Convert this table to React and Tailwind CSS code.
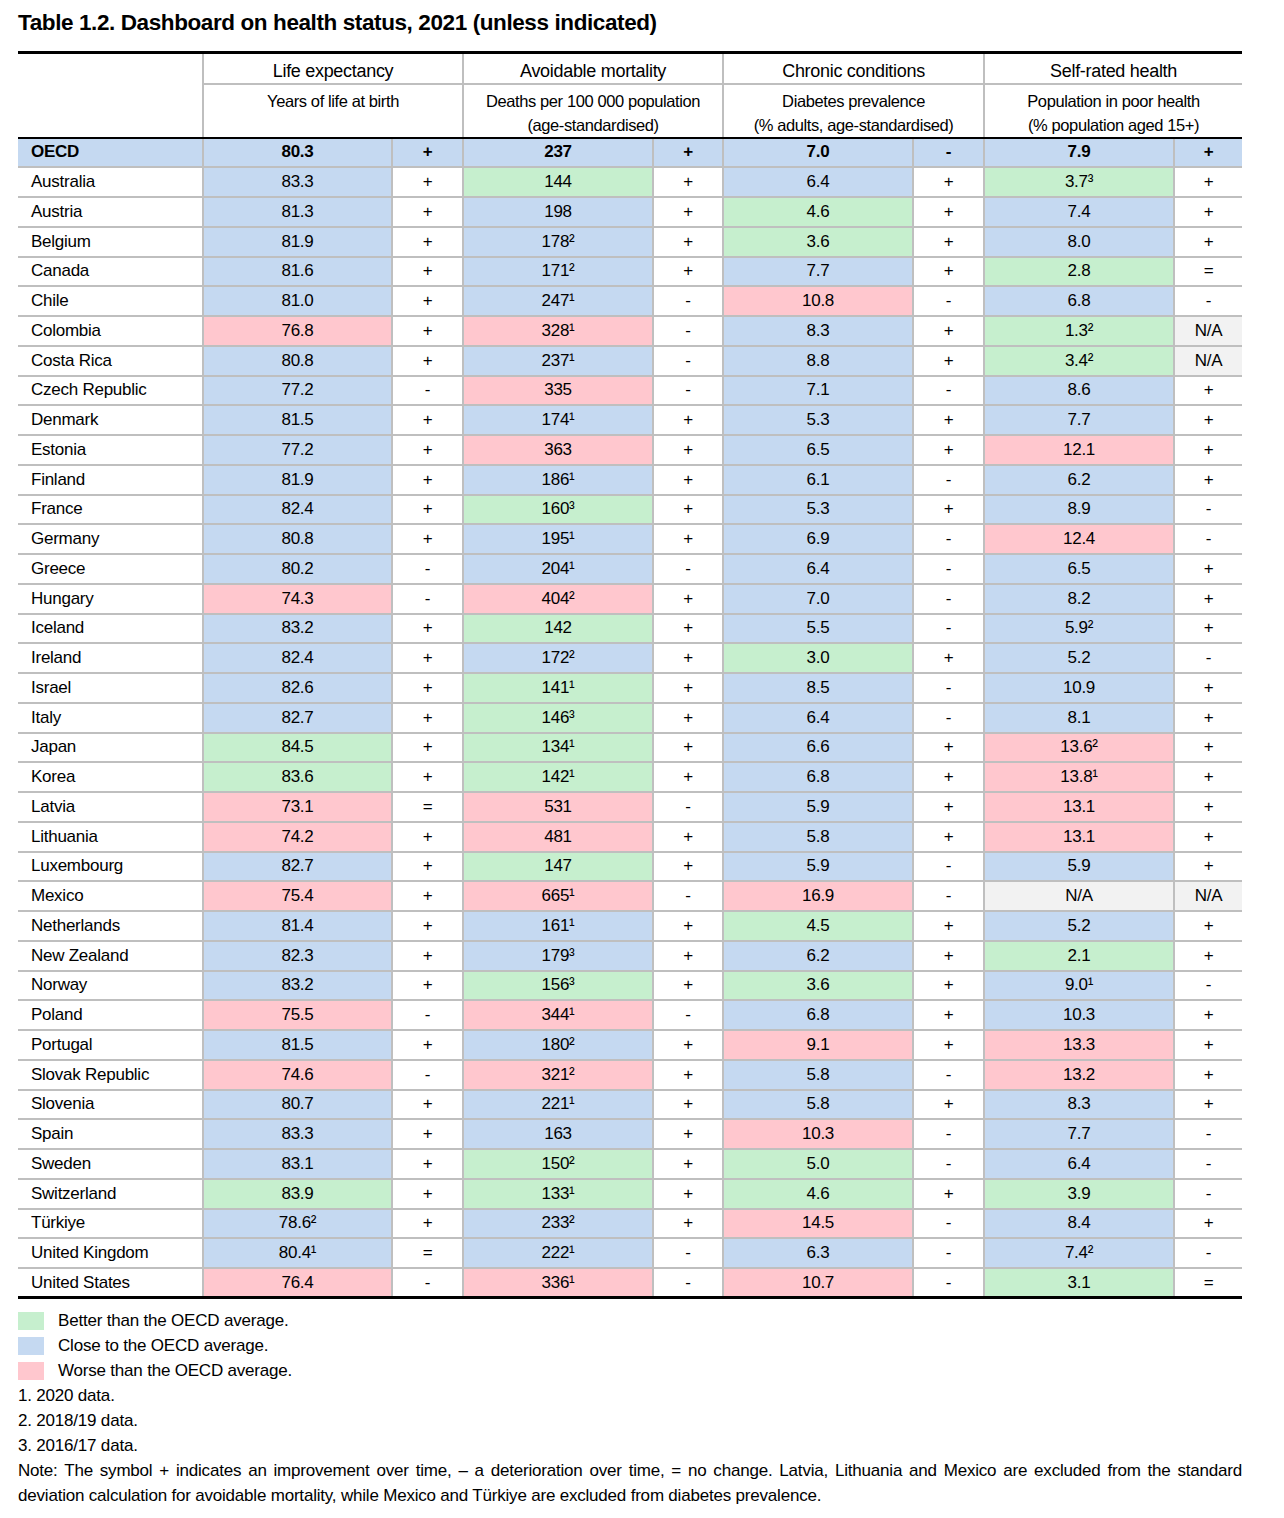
import React from "react";

const rows = [
  ["Australia", "83.3", "b", "+", "144", "g", "+", "6.4", "b", "+", "3.7³", "g", "+"],
  ["Austria", "81.3", "b", "+", "198", "b", "+", "4.6", "g", "+", "7.4", "b", "+"],
  ["Belgium", "81.9", "b", "+", "178²", "b", "+", "3.6", "g", "+", "8.0", "b", "+"],
  ["Canada", "81.6", "b", "+", "171²", "b", "+", "7.7", "b", "+", "2.8", "g", "="],
  ["Chile", "81.0", "b", "+", "247¹", "b", "-", "10.8", "p", "-", "6.8", "b", "-"],
  ["Colombia", "76.8", "p", "+", "328¹", "p", "-", "8.3", "b", "+", "1.3²", "g", "N/A"],
  ["Costa Rica", "80.8", "b", "+", "237¹", "b", "-", "8.8", "b", "+", "3.4²", "g", "N/A"],
  ["Czech Republic", "77.2", "b", "-", "335", "p", "-", "7.1", "b", "-", "8.6", "b", "+"],
  ["Denmark", "81.5", "b", "+", "174¹", "b", "+", "5.3", "b", "+", "7.7", "b", "+"],
  ["Estonia", "77.2", "b", "+", "363", "p", "+", "6.5", "b", "+", "12.1", "p", "+"],
  ["Finland", "81.9", "b", "+", "186¹", "b", "+", "6.1", "b", "-", "6.2", "b", "+"],
  ["France", "82.4", "b", "+", "160³", "g", "+", "5.3", "b", "+", "8.9", "b", "-"],
  ["Germany", "80.8", "b", "+", "195¹", "b", "+", "6.9", "b", "-", "12.4", "p", "-"],
  ["Greece", "80.2", "b", "-", "204¹", "b", "-", "6.4", "b", "-", "6.5", "b", "+"],
  ["Hungary", "74.3", "p", "-", "404²", "p", "+", "7.0", "b", "-", "8.2", "b", "+"],
  ["Iceland", "83.2", "b", "+", "142", "g", "+", "5.5", "b", "-", "5.9²", "b", "+"],
  ["Ireland", "82.4", "b", "+", "172²", "b", "+", "3.0", "g", "+", "5.2", "b", "-"],
  ["Israel", "82.6", "b", "+", "141¹", "g", "+", "8.5", "b", "-", "10.9", "b", "+"],
  ["Italy", "82.7", "b", "+", "146³", "g", "+", "6.4", "b", "-", "8.1", "b", "+"],
  ["Japan", "84.5", "g", "+", "134¹", "g", "+", "6.6", "b", "+", "13.6²", "p", "+"],
  ["Korea", "83.6", "g", "+", "142¹", "g", "+", "6.8", "b", "+", "13.8¹", "p", "+"],
  ["Latvia", "73.1", "p", "=", "531", "p", "-", "5.9", "b", "+", "13.1", "p", "+"],
  ["Lithuania", "74.2", "p", "+", "481", "p", "+", "5.8", "b", "+", "13.1", "p", "+"],
  ["Luxembourg", "82.7", "b", "+", "147", "g", "+", "5.9", "b", "-", "5.9", "b", "+"],
  ["Mexico", "75.4", "p", "+", "665¹", "p", "-", "16.9", "p", "-", "N/A", "n", "N/A"],
  ["Netherlands", "81.4", "b", "+", "161¹", "b", "+", "4.5", "g", "+", "5.2", "b", "+"],
  ["New Zealand", "82.3", "b", "+", "179³", "b", "+", "6.2", "b", "+", "2.1", "g", "+"],
  ["Norway", "83.2", "b", "+", "156³", "g", "+", "3.6", "g", "+", "9.0¹", "b", "-"],
  ["Poland", "75.5", "p", "-", "344¹", "p", "-", "6.8", "b", "+", "10.3", "b", "+"],
  ["Portugal", "81.5", "b", "+", "180²", "b", "+", "9.1", "p", "+", "13.3", "p", "+"],
  ["Slovak Republic", "74.6", "p", "-", "321²", "p", "+", "5.8", "b", "-", "13.2", "p", "+"],
  ["Slovenia", "80.7", "b", "+", "221¹", "b", "+", "5.8", "b", "+", "8.3", "b", "+"],
  ["Spain", "83.3", "b", "+", "163", "b", "+", "10.3", "p", "-", "7.7", "b", "-"],
  ["Sweden", "83.1", "b", "+", "150²", "g", "+", "5.0", "g", "-", "6.4", "b", "-"],
  ["Switzerland", "83.9", "g", "+", "133¹", "g", "+", "4.6", "g", "+", "3.9", "g", "-"],
  ["Türkiye", "78.6²", "b", "+", "233²", "b", "+", "14.5", "p", "-", "8.4", "b", "+"],
  ["United Kingdom", "80.4¹", "b", "=", "222¹", "b", "-", "6.3", "b", "-", "7.4²", "b", "-"],
  ["United States", "76.4", "p", "-", "336¹", "p", "-", "10.7", "p", "-", "3.1", "g", "="],
];

const bg = {
  b: "bg-[#c5d9f1]",
  g: "bg-[#c6efce]",
  p: "bg-[#ffc7ce]",
  n: "bg-[#f2f2f2]",
  w: "bg-white",
};

const cell = "border-l-2 border-b-2 border-[#bfbfbf] text-center p-0 align-middle";

function Row({ r }) {
  const out = [];
  for (let i = 0; i < 4; i++) {
    const v = r[1 + i * 3];
    const c = r[2 + i * 3];
    const s = r[3 + i * 3];
    out.push(
      <td key={"v" + i} className={`${cell} ${bg[c]}`}>{v}</td>
    );
    out.push(
      <td key={"s" + i} className={`${cell} ${s === "N/A" ? bg.n : bg.w}`}>{s}</td>
    );
  }
  return (
    <tr className="h-[29.75px]">
      <td className="border-b-2 border-[#bfbfbf] pl-[13px] p-0 text-left align-middle">{r[0]}</td>
      {out}
    </tr>
  );
}

function Swatch({ color, label }) {
  return (
    <div className="flex items-center h-[25px]">
      <div className={`w-[26px] h-[18px] ${color}`} />
      <span className="ml-[14px]">{label}</span>
    </div>
  );
}

export default function App() {
  const font = { fontFamily: '"Liberation Sans Narrow", "Arial Narrow", "Liberation Sans", Arial, sans-serif' };
  return (
    <div className="bg-white w-[1284px] min-h-[1518px] px-[18px] pt-[7px] text-black" style={font}>
      <h1 className="text-[22.5px] tracking-[-0.4px] font-bold leading-[32px] m-0">
        Table 1.2. Dashboard on health status, 2021 (unless indicated)
      </h1>
      <table className="mt-[12px] w-[1224px] border-collapse table-fixed border-t-[3px] border-b-[3px] border-black text-[17px] tracking-[-0.25px] leading-[22px]">
        <colgroup>
          <col className="w-[185px]" />
          <col className="w-[189px]" />
          <col className="w-[71px]" />
          <col className="w-[190px]" />
          <col className="w-[70px]" />
          <col className="w-[190px]" />
          <col className="w-[71px]" />
          <col className="w-[190px]" />
          <col className="w-[68px]" />
        </colgroup>
        <thead>
          <tr className="h-[31px]">
            <th className="p-0" />
            {["Life expectancy", "Avoidable mortality", "Chronic conditions", "Self-rated health"].map((t) => (
              <th key={t} colSpan={2} className="border-l-2 border-b-2 border-[#bfbfbf] font-normal text-[18px] tracking-[-0.3px] text-center px-0 pt-[6px] pb-0 align-middle">
                {t}
              </th>
            ))}
          </tr>
          <tr className="h-[53px]">
            <th className="p-0 border-b-2 border-black" />
            {[
              ["Years of life at birth", ""],
              ["Deaths per 100 000 population", "(age-standardised)"],
              ["Diabetes prevalence", "(% adults, age-standardised)"],
              ["Population in poor health", "(% population aged 15+)"],
            ].map(([a, b]) => (
              <th key={a} colSpan={2} className="border-l-2 border-[#bfbfbf] border-b-2 border-b-black font-normal text-[16.5px] tracking-[-0.4px] leading-[24px] text-center px-0 pt-[4px] pb-0 align-top">
                <div>{a}</div>
                {b && <div>{b}</div>}
              </th>
            ))}
          </tr>
        </thead>
        <tbody>
          <tr className="h-[29.75px] font-bold bg-[#c5d9f1]">
            <td className="border-b-2 border-[#bfbfbf] pl-[13px] p-0 text-left align-middle">OECD</td>
            {["80.3", "+", "237", "+", "7.0", "-", "7.9", "+"].map((v, i) => (
              <td key={i} className={cell}>{v}</td>
            ))}
          </tr>
          {rows.map((r) => (
            <Row key={r[0]} r={r} />
          ))}
        </tbody>
      </table>
      <div className="mt-[9px] text-[17px] tracking-[-0.2px] leading-[25px]">
        <Swatch color="bg-[#c6efce]" label="Better than the OECD average." />
        <Swatch color="bg-[#c5d9f1]" label="Close to the OECD average." />
        <Swatch color="bg-[#ffc7ce]" label="Worse than the OECD average." />
        <div>1. 2020 data.</div>
        <div>2. 2018/19 data.</div>
        <div>3. 2016/17 data.</div>
        <p className="m-0 text-justify w-[1224px] tracking-[-0.2px]">
          Note: The symbol + indicates an improvement over time, – a deterioration over time, = no change. Latvia, Lithuania and Mexico are excluded from the standard deviation calculation for avoidable mortality, while Mexico and Türkiye are excluded from diabetes prevalence.
        </p>
      </div>
    </div>
  );
}
